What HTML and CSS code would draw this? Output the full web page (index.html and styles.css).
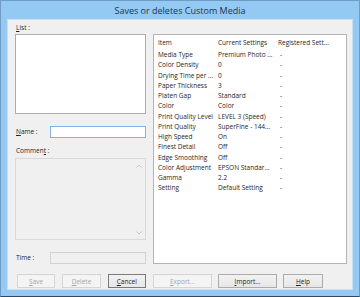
FILE: index.html
```html
<!DOCTYPE html>
<html lang="en">
<head>
    <meta charset="UTF-8">
    <title>Saves or deletes Custom Media</title>
    <link rel="stylesheet" href="styles.css">
</head>
<body>
    <div class="window">
        <div class="titlebar">Saves or deletes Custom Media</div>
        <div class="content">
            <div class="left">
                <div class="label"><u>L</u>ist :</div>
                <div class="listbox"></div>

                <div class="field-row name-row">
                    <span class="label"><u>N</u>ame :</span>
                    <div class="textbox active"></div>
                </div>

                <div class="label comment-label">Commen<u>t</u> :</div>
                <div class="comment">
                    <svg class="arrow up" width="6" height="4" viewBox="0 0 6 4"><path d="M0.5 3.5 L3 1 L5.5 3.5" fill="none" stroke="#c4c4c4" stroke-width="1"/></svg>
                    <svg class="arrow down" width="6" height="4" viewBox="0 0 6 4"><path d="M0.5 0.5 L3 3 L5.5 0.5" fill="none" stroke="#c4c4c4" stroke-width="1"/></svg>
                </div>

                <div class="field-row time-row">
                    <span class="label">Time :</span>
                    <div class="textbox disabled"></div>
                </div>

                <div class="buttons">
                    <button class="btn" disabled><u>S</u>ave</button>
                    <button class="btn" disabled><u>D</u>elete</button>
                    <button class="btn default"><u>C</u>ancel</button>
                </div>
            </div>

            <div class="right">
                <div class="settings">
                    <table>
                        <thead>
                            <tr><th>Item</th><th>Current Settings</th><th>Registered Sett...</th></tr>
                        </thead>
                        <tbody>
                            <tr><td>Media Type</td><td>Premium Photo ...</td><td>-</td></tr>
                            <tr><td>Color Density</td><td>0</td><td>-</td></tr>
                            <tr><td>Drying Time per ...</td><td>0</td><td>-</td></tr>
                            <tr><td>Paper Thickness</td><td>3</td><td>-</td></tr>
                            <tr><td>Platen Gap</td><td>Standard</td><td>-</td></tr>
                            <tr><td>Color</td><td>Color</td><td>-</td></tr>
                            <tr><td>Print Quality Level</td><td>LEVEL 3 (Speed)</td><td>-</td></tr>
                            <tr><td>Print Quality</td><td>SuperFine - 144...</td><td>-</td></tr>
                            <tr><td>High Speed</td><td>On</td><td>-</td></tr>
                            <tr><td>Finest Detail</td><td>Off</td><td>-</td></tr>
                            <tr><td>Edge Smoothing</td><td>Off</td><td>-</td></tr>
                            <tr><td>Color Adjustment</td><td>EPSON Standar...</td><td>-</td></tr>
                            <tr><td>Gamma</td><td>2.2</td><td>-</td></tr>
                            <tr><td>Setting</td><td>Default Setting</td><td>-</td></tr>
                        </tbody>
                    </table>
                </div>

                <div class="buttons">
                    <button class="btn wide" disabled><u>E</u>xport...</button>
                    <button class="btn wide"><u>I</u>mport...</button>
                    <button class="btn"><u>H</u>elp</button>
                </div>
            </div>
        </div>
    </div>
</body>
</html>
```

FILE: styles.css
```css
body {
    margin: 0;
    font-family: "Open Sans", "Noto Sans", sans-serif;
    font-size: 6.5px;
    color: #262626;
}

.window {
    width: 360px;
    height: 297px;
    box-sizing: border-box;
    background: #93c9f3;
    border: 1px solid #6f9cc4;
    border-bottom-color: #2c4a68;
    padding: 0 6px 6px;
    display: flex;
    flex-direction: column;
}

.titlebar {
    height: 18px;
    line-height: 19px;
    text-align: center;
    font-size: 9px;
    color: #22364c;
}

.content {
    flex: 1;
    background: #f0f0f0;
    border: 1px solid #c9dff2;
    padding: 1px 4px 0 7px;
    display: flex;
    gap: 7px;
}

.left {
    width: 131px;
    display: flex;
    flex-direction: column;
}

.right {
    width: 194px;
    display: flex;
    flex-direction: column;
    padding-top: 13px;
}

.label {
    line-height: 13px;
    padding-left: 1px;
}

.listbox {
    height: 80px;
    box-sizing: border-box;
    background: #fff;
    border: 1px solid #acacac;
}

.field-row {
    display: flex;
    align-items: center;
    margin-top: 11px;
}

.field-row .label {
    width: 34px;
}

.textbox {
    flex: 1;
    height: 12px;
    box-sizing: border-box;
}

.textbox.active {
    background: #fff;
    border: 1px solid #7eb4ea;
}

.textbox.disabled {
    background: #f0f0f0;
    border: 1px solid #d2d2d2;
}

.comment-label {
    margin-top: 6px;
}

.comment {
    height: 82px;
    margin-top: 1px;
    box-sizing: border-box;
    border: 1px solid #d9d9d9;
    display: flex;
    flex-direction: column;
    align-items: flex-end;
    justify-content: space-between;
    padding: 5px 3px 4px 0;
}

.time-row {
    margin-top: 11px;
}

.buttons {
    display: flex;
    gap: 6px;
    margin-top: auto;
    margin-bottom: 1px;
}

.left .buttons {
    padding-left: 2px;
    gap: 7px;
}

.btn {
    width: 40px;
    height: 14px;
    padding: 0;
    box-sizing: border-box;
    font-family: inherit;
    font-size: 6.5px;
    color: #262626;
    background: linear-gradient(#f2f2f2, #e6e6e6);
    border: 1px solid #acacac;
    border-radius: 0;
}

.btn.wide {
    width: 59px;
}

.btn.default {
    border-color: #7a7a7a;
}

.btn:disabled {
    color: #a6a6a6;
    background: #f4f4f4;
    border-color: #d5d5d5;
}

.settings {
    height: 230px;
    box-sizing: border-box;
    background: #fff;
    border: 1px solid #b4b4b4;
    padding: 2px 0 0 4px;
}

table {
    border-collapse: collapse;
    table-layout: fixed;
    width: 188px;
}

th, td {
    text-align: left;
    font-weight: normal;
    padding: 0;
    height: 10.25px;
    line-height: 10px;
    white-space: nowrap;
    overflow: hidden;
}

th:nth-child(1), td:nth-child(1) {
    width: 60px;
}

th:nth-child(2), td:nth-child(2) {
    width: 60px;
}

td:nth-child(3) {
    padding-left: 2px;
}

thead th {
    height: 12px;
    padding-bottom: 1px;
}
```
